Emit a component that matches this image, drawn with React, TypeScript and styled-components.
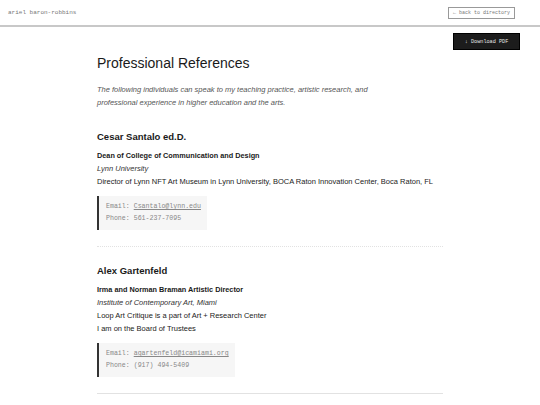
import styled, { createGlobalStyle } from 'styled-components';

const GlobalStyle = createGlobalStyle`
  html, body {
    margin: 0;
    padding: 0;
    background: #ffffff;
  }
  body {
    font-family: "Liberation Sans", Arial, sans-serif;
    color: #1a1a1a;
  }
`

const Header = styled.header`
  display: flex;
  justify-content: space-between;
  align-items: center;
  height: 25px;
  padding: 0 8px 0 8px;
  border-bottom: 2px solid #c8c8c8;
`

const SiteName = styled.span`
  font-family: "Liberation Mono", "Courier New", monospace;
  font-size: 6px;
  color: #777;
`

const BackLink = styled.a`
  font-family: "Liberation Mono", "Courier New", monospace;
  font-size: 5px;
  color: #777;
  text-decoration: none;
  border: 1px solid #999;
  padding: 2px 4px;
  margin-right: 17px;
`

const Toolbar = styled.div`
  display: flex;
  justify-content: flex-end;
  padding: 6px 20px 0 0;
`

const PdfButton = styled.button`
  font-family: "Liberation Mono", "Courier New", monospace;
  font-size: 5.2px;
  color: #e6e6e6;
  background: #1c1c1c;
  border: 1px solid #000;
  width: 67px;
  height: 17px;
  padding: 0;
  cursor: pointer;
`

const Main = styled.main`
  max-width: 346px;
  margin: 0 auto;
`

const Title = styled.h1`
  font-size: 14px;
  font-weight: 400;
  line-height: 17px;
  margin: 5px 0 11px;
`

const Intro = styled.p`
  font-size: 7.5px;
  font-style: italic;
  line-height: 13px;
  color: #555;
  margin: 0 0 22px;
`

const Reference = styled.section<{ $last?: boolean }>`
  padding-bottom: 16px;
  margin-bottom: 18px;
  border-bottom: 1px ${p => (p.$last ? 'solid' : 'dotted')} #e2e2e2;
`

const Name = styled.h2`
  font-size: 9.5px;
  font-weight: 700;
  line-height: 12px;
  margin: 0 0 6px;
`

const Role = styled.div`
  font-size: 7.3px;
  font-weight: 700;
  line-height: 13px;
`

const Org = styled.div`
  font-size: 7.5px;
  font-style: italic;
  line-height: 13px;
  color: #333;
`

const Line = styled.div`
  font-size: 7.5px;
  line-height: 13px;
  color: #222;
`

const Contact = styled.div`
  display: inline-block;
  margin-top: 8px;
  padding: 5px 6px 5px 7px;
  background: #f6f6f6;
  border-left: 2px solid #333;
  font-family: "Liberation Mono", "Courier New", monospace;
  font-size: 6.6px;
  line-height: 12px;
  color: #888;
`

const Mail = styled.a`
  color: #888;
  text-decoration: underline;
  text-underline-offset: 1px;
`

type Ref = {
  name: string
  role: string
  org: string
  lines: string[]
  email: string
  phone: string
}

const refs: Ref[] = [
  {
    name: 'Cesar Santalo ed.D.',
    role: 'Dean of College of Communication and Design',
    org: 'Lynn University',
    lines: ['Director of Lynn NFT Art Museum in Lynn University, BOCA Raton Innovation Center, Boca Raton, FL'],
    email: 'Csantalo@lynn.edu',
    phone: '561-237-7095',
  },
  {
    name: 'Alex Gartenfeld',
    role: 'Irma and Norman Braman Artistic Director',
    org: 'Institute of Contemporary Art, Miami',
    lines: ['Loop Art Critique is a part of Art + Research Center', 'I am on the Board of Trustees'],
    email: 'agartenfeld@icamiami.org',
    phone: '(917) 494-5409',
  },
]

export default function App() {
  return (
    <>
      <GlobalStyle />
      <Header>
        <SiteName>ariel baron-robbins</SiteName>
        <BackLink href="#">← back to directory</BackLink>
      </Header>
      <Toolbar>
        <PdfButton>↓ Download PDF</PdfButton>
      </Toolbar>
      <Main>
        <Title>Professional References</Title>
        <Intro>
          The following individuals can speak to my teaching practice, artistic research, and
          <br />
          professional experience in higher education and the arts.
        </Intro>
        {refs.map((r, i) => (
          <Reference key={r.name} $last={i === refs.length - 1}>
            <Name>{r.name}</Name>
            <Role>{r.role}</Role>
            <Org>{r.org}</Org>
            {r.lines.map(l => (
              <Line key={l}>{l}</Line>
            ))}
            <Contact>
              Email: <Mail href={'mailto:' + r.email}>{r.email}</Mail>
              <br />
              Phone: {r.phone}
            </Contact>
          </Reference>
        ))}
      </Main>
    </>
  )
}
